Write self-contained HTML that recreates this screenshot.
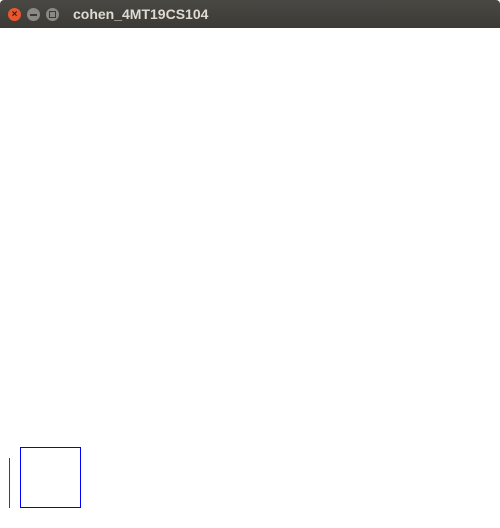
<html><body style="margin:0;width:500px;height:528px;background:#fff;overflow:hidden;position:relative;font-family:'Liberation Sans',sans-serif">
<div style="position:absolute;left:0;top:0;width:500px;height:28px;background:linear-gradient(#4a4843,#3b3a36);border-radius:4px 4px 0 0"></div>
<div style="position:absolute;left:8px;top:8px;width:13px;height:13px;border-radius:50%;background:#e9572e;color:#3a1a10;font-size:10px;line-height:13px;text-align:center;font-weight:bold">×</div>
<div style="position:absolute;left:27px;top:8px;width:13px;height:13px;border-radius:50%;background:#8a8983"><div style="margin:6px 3px;height:1.5px;background:#3b3a36"></div></div>
<div style="position:absolute;left:46px;top:8px;width:13px;height:13px;border-radius:50%;background:#8a8983"><div style="margin:3px;width:5px;height:5px;border:1px solid #3b3a36"></div></div>
<div style="position:absolute;left:73px;top:6px;color:#dfdbd2;font-weight:bold;font-size:14px">cohen_4MT19CS104</div>
<div style="position:absolute;left:9px;top:458px;width:1px;height:50px;background:#d00"></div>
<div style="position:absolute;left:20px;top:447px;width:59px;height:59px;border:1px solid #00f"></div>
</body></html>
